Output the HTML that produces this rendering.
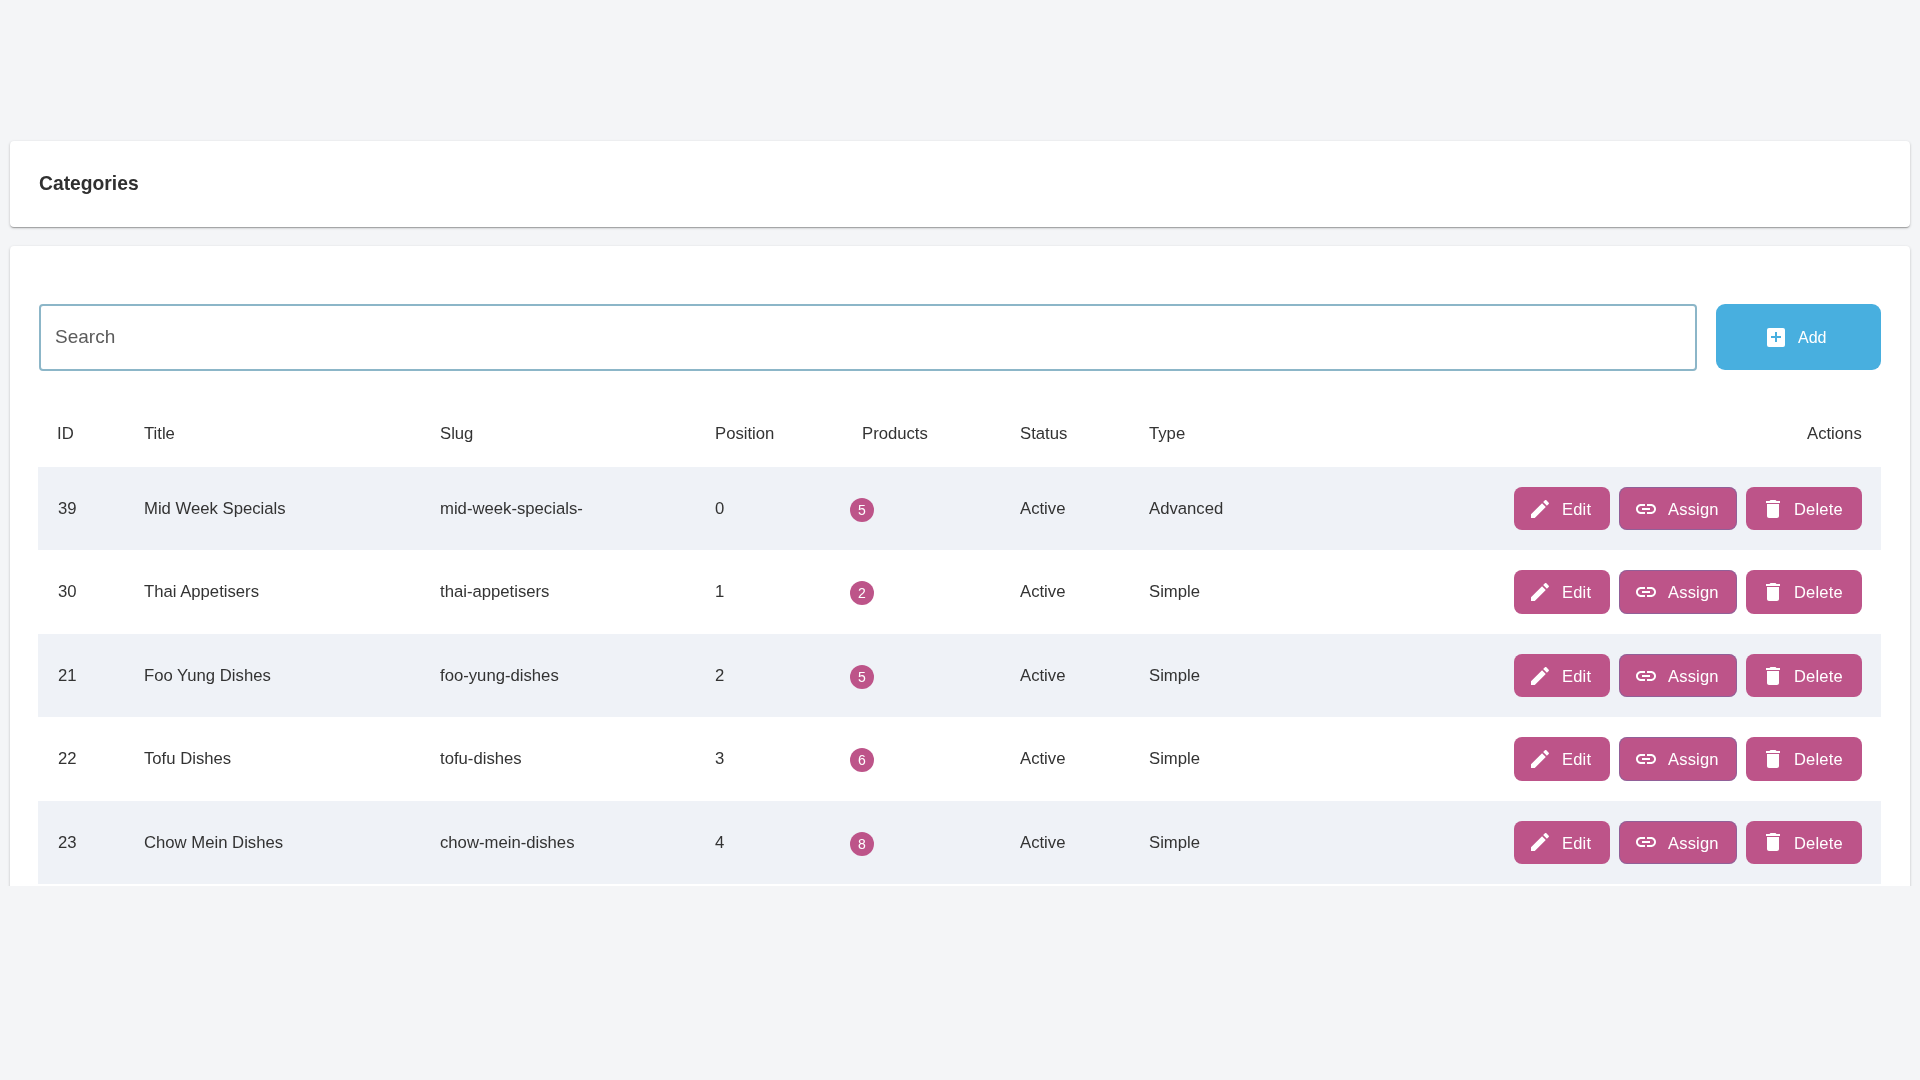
<!DOCTYPE html>
<html><head><meta charset="utf-8"><style>
*{box-sizing:border-box;margin:0;padding:0}
html,body{width:1920px;height:1080px;overflow:hidden;background:#f4f5f7;font-family:"Liberation Sans",sans-serif;color:#333}
.a{position:absolute}
h1,.ph,.addt,.th,.td,.badge,.btn span{will-change:transform}
.card{position:absolute;left:10px;width:1900px;background:#fff;border-radius:4px;
box-shadow:0 1px 3px rgba(0,0,0,.2),0 1px 1px rgba(0,0,0,.14),0 2px 1px -1px rgba(0,0,0,.12)}
#c1{top:141px;height:86px}
#clip{position:absolute;left:0;top:0;width:1920px;height:885.5px;overflow:hidden}
#c2{top:246px;height:700px}
h1{position:absolute;left:39.3px;top:173px;font-size:19.3px;font-weight:bold;line-height:22px;color:#303030}
.search{position:absolute;left:38.5px;top:303.6px;width:1658px;height:67px;border:2px solid #8cb6c8;border-radius:4px;background:#fff}
.ph{position:absolute;left:55px;top:325.5px;font-size:19px;line-height:22px;color:#5b5b5b}
.add{position:absolute;left:1715.8px;top:303.8px;width:165.4px;height:66.6px;border-radius:9px;background:#48afdf}
.ic{position:absolute;left:1767px;top:327.5px;width:18px;height:19px;background:#fff;border-radius:2px}
.ic:before{content:"";position:absolute;left:4px;top:8.5px;width:10px;height:2px;background:#48afdf}
.ic:after{content:"";position:absolute;left:8px;top:4.5px;width:2px;height:10px;background:#48afdf}
.addt{position:absolute;left:1797.8px;top:328px;font-size:16px;line-height:20px;color:#fff}
.th{position:absolute;top:423.7px;font-size:16.7px;line-height:20px;color:#333}
.row{position:absolute;left:38px;width:1843px;height:83.45px}
.row.s{background:#eff2f7}
.td{position:absolute;top:31.8px;font-size:16.7px;line-height:20px;color:#333}
.badge{position:absolute;left:812px;top:31px;width:24px;height:24px;border-radius:12px;background:#bd5489;color:#fff;font-size:14px;line-height:24px;text-align:center}
.btn{position:absolute;top:20px;height:43.4px;border-radius:8px;background:#bd5489;color:#fff;font-size:16px;line-height:20px}
.btn svg{position:absolute;left:14px;top:9.7px;width:24px;height:24px;fill:#fff}
.btn span{position:absolute;top:11.8px;font-size:16.5px;letter-spacing:.2px}
.b1{left:1476px;width:96px}
.b1 span{left:48px}
.b2{left:1581px;width:117.5px;box-shadow:inset 0 0 0 1px rgba(90,110,170,.45)}
.b2 span{left:49px}
.b2 svg{left:14.6px}
.b3{left:1708.3px;width:116px}
.b3 span{left:48px}
.b3 svg{left:14.7px}
</style></head>
<body>
<div class="card" id="c1"></div>
<h1>Categories</h1>
<div id="clip"><div class="card" id="c2"></div></div>
<div class="search"></div>
<div class="ph">Search</div>
<div class="add"></div><div class="ic"></div><div class="addt">Add</div>
<div class="th" style="left:57.3px">ID</div><div class="th" style="left:143.8px">Title</div><div class="th" style="left:439.8px">Slug</div><div class="th" style="left:714.6px">Position</div><div class="th" style="left:862.4px">Products</div><div class="th" style="left:1019.8px">Status</div><div class="th" style="left:1148.8px">Type</div><div class="th" style="right:58px">Actions</div>
<div class="row s" style="top:467.00px"><div class="td" style="left:19.5px">39</div><div class="td" style="left:105.8px">Mid Week Specials</div><div class="td" style="left:401.8px">mid-week-specials-</div><div class="td" style="left:676.6px">0</div><div class="badge">5</div><div class="td" style="left:981.8px">Active</div><div class="td" style="left:1110.8px">Advanced</div><div class="btn b1"><svg viewBox="0 0 24 24"><path d="M3 17.25V21h3.75L17.81 9.94l-3.75-3.75L3 17.25zM20.71 7.04c.39-.39.39-1.02 0-1.41l-2.34-2.34c-.39-.39-1.020-.39-1.41 0l-1.83 1.83 3.75 3.75 1.83-1.83z"/></svg><span>Edit</span></div><div class="btn b2"><svg viewBox="0 0 24 24"><path d="M3.9 12c0-1.71 1.39-3.1 3.1-3.1h4V7H7c-2.76 0-5 2.24-5 5s2.24 5 5 5h4v-1.9H7c-1.71 0-3.1-1.39-3.1-3.1zM8 13h8v-2H8v2zm9-6h-4v1.9h4c1.71 0 3.1 1.39 3.1 3.1s-1.39 3.1-3.1 3.1h-4V17h4c2.76 0 5-2.24 5-5s-2.24-5-5-5z"/></svg><span>Assign</span></div><div class="btn b3"><svg viewBox="0 0 24 24"><path d="M6 19c0 1.1.9 2 2 2h8c1.1 0 2-.9 2-2V7H6v12zM19 4h-3.5l-1-1h-5l-1 1H5v2h14V4z"/></svg><span>Delete</span></div></div><div class="row" style="top:550.45px"><div class="td" style="left:19.5px">30</div><div class="td" style="left:105.8px">Thai Appetisers</div><div class="td" style="left:401.8px">thai-appetisers</div><div class="td" style="left:676.6px">1</div><div class="badge">2</div><div class="td" style="left:981.8px">Active</div><div class="td" style="left:1110.8px">Simple</div><div class="btn b1"><svg viewBox="0 0 24 24"><path d="M3 17.25V21h3.75L17.81 9.94l-3.75-3.75L3 17.25zM20.71 7.04c.39-.39.39-1.02 0-1.41l-2.34-2.34c-.39-.39-1.020-.39-1.41 0l-1.83 1.83 3.75 3.75 1.83-1.83z"/></svg><span>Edit</span></div><div class="btn b2"><svg viewBox="0 0 24 24"><path d="M3.9 12c0-1.71 1.39-3.1 3.1-3.1h4V7H7c-2.76 0-5 2.24-5 5s2.24 5 5 5h4v-1.9H7c-1.71 0-3.1-1.39-3.1-3.1zM8 13h8v-2H8v2zm9-6h-4v1.9h4c1.71 0 3.1 1.39 3.1 3.1s-1.39 3.1-3.1 3.1h-4V17h4c2.76 0 5-2.24 5-5s-2.24-5-5-5z"/></svg><span>Assign</span></div><div class="btn b3"><svg viewBox="0 0 24 24"><path d="M6 19c0 1.1.9 2 2 2h8c1.1 0 2-.9 2-2V7H6v12zM19 4h-3.5l-1-1h-5l-1 1H5v2h14V4z"/></svg><span>Delete</span></div></div><div class="row s" style="top:633.90px"><div class="td" style="left:19.5px">21</div><div class="td" style="left:105.8px">Foo Yung Dishes</div><div class="td" style="left:401.8px">foo-yung-dishes</div><div class="td" style="left:676.6px">2</div><div class="badge">5</div><div class="td" style="left:981.8px">Active</div><div class="td" style="left:1110.8px">Simple</div><div class="btn b1"><svg viewBox="0 0 24 24"><path d="M3 17.25V21h3.75L17.81 9.94l-3.75-3.75L3 17.25zM20.71 7.04c.39-.39.39-1.02 0-1.41l-2.34-2.34c-.39-.39-1.020-.39-1.41 0l-1.83 1.83 3.75 3.75 1.83-1.83z"/></svg><span>Edit</span></div><div class="btn b2"><svg viewBox="0 0 24 24"><path d="M3.9 12c0-1.71 1.39-3.1 3.1-3.1h4V7H7c-2.76 0-5 2.24-5 5s2.24 5 5 5h4v-1.9H7c-1.71 0-3.1-1.39-3.1-3.1zM8 13h8v-2H8v2zm9-6h-4v1.9h4c1.71 0 3.1 1.39 3.1 3.1s-1.39 3.1-3.1 3.1h-4V17h4c2.76 0 5-2.24 5-5s-2.24-5-5-5z"/></svg><span>Assign</span></div><div class="btn b3"><svg viewBox="0 0 24 24"><path d="M6 19c0 1.1.9 2 2 2h8c1.1 0 2-.9 2-2V7H6v12zM19 4h-3.5l-1-1h-5l-1 1H5v2h14V4z"/></svg><span>Delete</span></div></div><div class="row" style="top:717.35px"><div class="td" style="left:19.5px">22</div><div class="td" style="left:105.8px">Tofu Dishes</div><div class="td" style="left:401.8px">tofu-dishes</div><div class="td" style="left:676.6px">3</div><div class="badge">6</div><div class="td" style="left:981.8px">Active</div><div class="td" style="left:1110.8px">Simple</div><div class="btn b1"><svg viewBox="0 0 24 24"><path d="M3 17.25V21h3.75L17.81 9.94l-3.75-3.75L3 17.25zM20.71 7.04c.39-.39.39-1.02 0-1.41l-2.34-2.34c-.39-.39-1.020-.39-1.41 0l-1.83 1.83 3.75 3.75 1.83-1.83z"/></svg><span>Edit</span></div><div class="btn b2"><svg viewBox="0 0 24 24"><path d="M3.9 12c0-1.71 1.39-3.1 3.1-3.1h4V7H7c-2.76 0-5 2.24-5 5s2.24 5 5 5h4v-1.9H7c-1.71 0-3.1-1.39-3.1-3.1zM8 13h8v-2H8v2zm9-6h-4v1.9h4c1.71 0 3.1 1.39 3.1 3.1s-1.39 3.1-3.1 3.1h-4V17h4c2.76 0 5-2.24 5-5s-2.24-5-5-5z"/></svg><span>Assign</span></div><div class="btn b3"><svg viewBox="0 0 24 24"><path d="M6 19c0 1.1.9 2 2 2h8c1.1 0 2-.9 2-2V7H6v12zM19 4h-3.5l-1-1h-5l-1 1H5v2h14V4z"/></svg><span>Delete</span></div></div><div class="row s" style="top:800.80px"><div class="td" style="left:19.5px">23</div><div class="td" style="left:105.8px">Chow Mein Dishes</div><div class="td" style="left:401.8px">chow-mein-dishes</div><div class="td" style="left:676.6px">4</div><div class="badge">8</div><div class="td" style="left:981.8px">Active</div><div class="td" style="left:1110.8px">Simple</div><div class="btn b1"><svg viewBox="0 0 24 24"><path d="M3 17.25V21h3.75L17.81 9.94l-3.75-3.75L3 17.25zM20.71 7.04c.39-.39.39-1.02 0-1.41l-2.34-2.34c-.39-.39-1.020-.39-1.41 0l-1.83 1.83 3.75 3.75 1.83-1.83z"/></svg><span>Edit</span></div><div class="btn b2"><svg viewBox="0 0 24 24"><path d="M3.9 12c0-1.71 1.39-3.1 3.1-3.1h4V7H7c-2.76 0-5 2.24-5 5s2.24 5 5 5h4v-1.9H7c-1.71 0-3.1-1.39-3.1-3.1zM8 13h8v-2H8v2zm9-6h-4v1.9h4c1.71 0 3.1 1.39 3.1 3.1s-1.39 3.1-3.1 3.1h-4V17h4c2.76 0 5-2.24 5-5s-2.24-5-5-5z"/></svg><span>Assign</span></div><div class="btn b3"><svg viewBox="0 0 24 24"><path d="M6 19c0 1.1.9 2 2 2h8c1.1 0 2-.9 2-2V7H6v12zM19 4h-3.5l-1-1h-5l-1 1H5v2h14V4z"/></svg><span>Delete</span></div></div>
</body></html>
